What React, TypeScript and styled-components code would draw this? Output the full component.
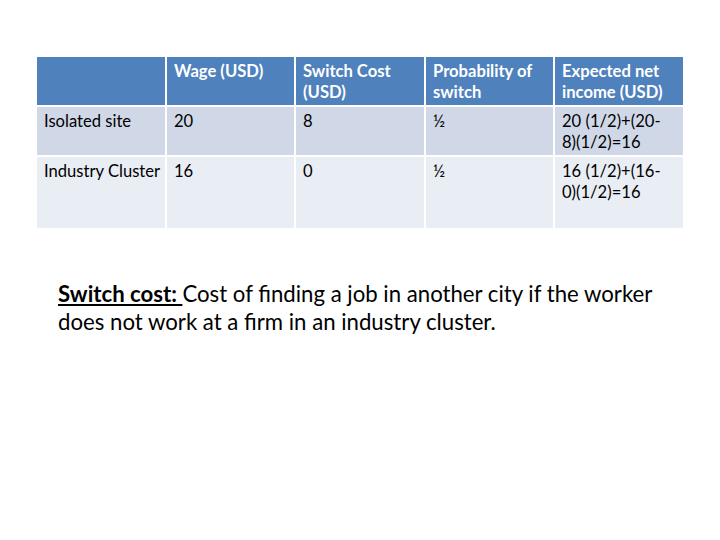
import React from 'react'
import styled, { createGlobalStyle } from 'styled-components'

const GlobalStyle = createGlobalStyle`
  html, body {
    margin: 0;
    padding: 0;
    background: #fff;
  }
  body {
    font-family: Lato, 'Open Sans', sans-serif;
  }
`

const Page = styled.div`
  width: 720px;
  height: 540px;
  padding: 57px 0 0 37px;
  box-sizing: border-box;
`

const Table = styled.div`
  display: grid;
  grid-template-columns: 128px 127px 128px 127px 128px;
  grid-template-rows: 48px 48px 71px;
  gap: 2px;
  width: 646px;
`

const Cell = styled.div<{ kind: 'head' | 'odd' | 'even' }>`
  box-sizing: border-box;
  padding: 4px 2px 0 7px;
  font-size: 16.6px;
  line-height: 21px;
  white-space: pre-line;
  color: ${({ kind }) => (kind === 'head' ? '#fff' : '#000')};
  font-weight: ${({ kind }) => (kind === 'head' ? 700 : 400)};
  background: ${({ kind }) =>
    kind === 'head' ? '#4f81bd' : kind === 'odd' ? '#d0d8e8' : '#e9edf4'};
`

const Note = styled.p`
  margin: 52px 0 0 21px;
  width: 610px;
  font-size: 22.2px;
  line-height: 28px;
  color: #000;
`

const Term = styled.span`
  font-weight: 700;
  text-decoration: underline;
`

const header = ['', 'Wage (USD)', 'Switch Cost (USD)', 'Probability of switch', 'Expected net income (USD)']

// the formulas wrap after the hyphen in the original slide
const rows = [
  ['Isolated site', '20', '8', '½', '20 (1/2)+(20-\n8)(1/2)=16'],
  ['Industry Cluster', '16', '0', '½', '16 (1/2)+(16-\n0)(1/2)=16'],
]

export default function App() {
  return (
    <Page>
      <GlobalStyle />
      <Table>
        {header.map((h, i) => (
          <Cell key={'h' + i} kind="head">
            {h}
          </Cell>
        ))}
        {rows.map((r, ri) =>
          r.map((c, ci) => (
            <Cell key={ri + '-' + ci} kind={ri === 0 ? 'odd' : 'even'}>
              {c}
            </Cell>
          ))
        )}
      </Table>
      <Note>
        <Term>Switch cost: </Term>Cost of finding a job in another city if the worker does not work at a
        firm in an industry cluster.
      </Note>
    </Page>
  )
}
